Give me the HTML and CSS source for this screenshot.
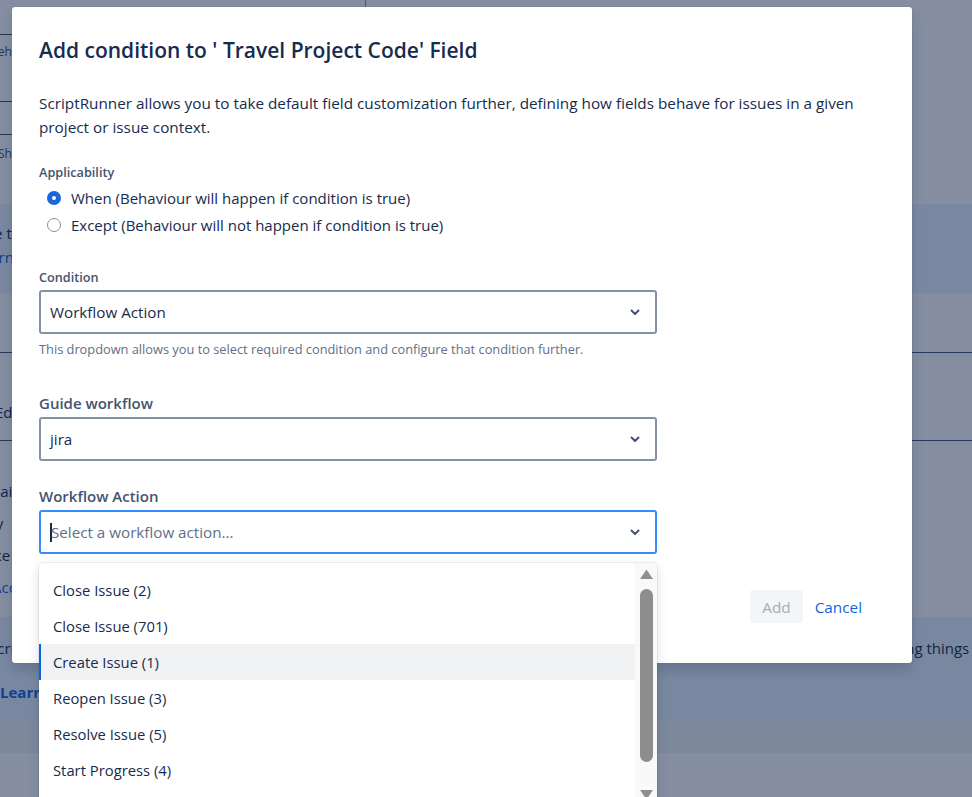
FILE: index.html
```html
<!DOCTYPE html>
<html lang="en">
<head>
<meta charset="utf-8">
<title>Add condition</title>
<link rel="stylesheet" href="styles.css">
</head>
<body>
<div class="page">
  <div class="top">
    <div class="top-left">
      <div class="tl-row tl-1"></div>
      <div class="tl-row tl-2"><span class="bg-small cut-a">Behaviours</span></div>
      <div class="tl-row tl-3"></div>
      <div class="tl-row tl-4"><span class="bg-small cut-b">Show</span></div>
    </div>
    <div class="top-right"></div>
  </div>
  <div class="banner banner-1">
    <div class="bg-text cut-c">Use the</div>
    <div class="bg-link cut-d">Learn more</div>
  </div>
  <div class="row row-5"></div>
  <div class="row row-6"><span class="bg-text cut-e">Edit</span></div>
  <div class="row row-7">
    <div class="bg-text cut-f">Email</div>
    <div class="bg-text cut-g">Summary</div>
    <div class="bg-text cut-h">Make</div>
    <div class="bg-link cut-i">Access</div>
  </div>
  <div class="banner banner-2">
    <div class="bg-line">
      <span class="bg-text cut-j">Scripting</span>
      <span class="bg-text tail">doing things better</span>
    </div>
    <div class="bg-link strong">Learn</div>
  </div>
  <div class="band"></div>
  <div class="rest"></div>
</div>

<div class="blanket"></div>

<section class="modal" role="dialog">
  <header class="modal-header">
    <h1 class="modal-title">Add condition to ' Travel Project Code' Field</h1>
  </header>
  <div class="modal-body">
    <p class="intro">ScriptRunner allows you to take default field customization further, defining how fields behave for issues in a given project or issue context.</p>

    <div class="label small">Applicability</div>
    <div class="radios">
      <div class="radio-row">
        <span class="radio checked"></span>
        <span class="radio-text">When (Behaviour will happen if condition is true)</span>
      </div>
      <div class="radio-row">
        <span class="radio"></span>
        <span class="radio-text">Except (Behaviour will not happen if condition is true)</span>
      </div>
    </div>

    <div class="label small cond-label">Condition</div>
    <div class="select">
      <span class="select-value">Workflow Action</span>
      <svg class="chev" width="10" height="7" viewBox="0 0 10 7"><path d="M1.5 1.5 5 5l3.5-3.5" fill="none" stroke="#44546F" stroke-width="2" stroke-linecap="round" stroke-linejoin="round"/></svg>
    </div>
    <div class="helper">This dropdown allows you to select required condition and configure that condition further.</div>

    <div class="label big guide-label">Guide workflow</div>
    <div class="select">
      <span class="select-value">jira</span>
      <svg class="chev" width="10" height="7" viewBox="0 0 10 7"><path d="M1.5 1.5 5 5l3.5-3.5" fill="none" stroke="#44546F" stroke-width="2" stroke-linecap="round" stroke-linejoin="round"/></svg>
    </div>

    <div class="label big action-label">Workflow Action</div>
    <div class="select-wrap">
      <div class="select focused">
        <span class="caret"></span>
        <span class="select-placeholder">Select a workflow action...</span>
        <svg class="chev" width="10" height="7" viewBox="0 0 10 7"><path d="M1.5 1.5 5 5l3.5-3.5" fill="none" stroke="#44546F" stroke-width="2" stroke-linecap="round" stroke-linejoin="round"/></svg>
      </div>
      <div class="menu">
        <ul class="options">
          <li class="option">Close Issue (2)</li>
          <li class="option">Close Issue (701)</li>
          <li class="option active">Create Issue (1)</li>
          <li class="option">Reopen Issue (3)</li>
          <li class="option">Resolve Issue (5)</li>
          <li class="option">Start Progress (4)</li>
          <li class="option">Stop Progress (301)</li>
        </ul>
        <div class="scrollbar">
          <svg class="arrow" width="13" height="10" viewBox="0 0 13 10"><path d="M6.5 0.5 13 10H0z" fill="#8f8f8f"/></svg>
          <div class="thumb"></div>
          <svg class="arrow" width="13" height="10" viewBox="0 0 13 10"><path d="M0 0h13L6.5 9.5z" fill="#8f8f8f"/></svg>
        </div>
      </div>
    </div>
  </div>
  <footer class="modal-footer">
    <button class="btn btn-add" disabled>Add</button>
    <button class="btn btn-cancel">Cancel</button>
  </footer>
</section>
</body>
</html>
```
FILE: styles.css
```css
* { box-sizing: border-box; }
html, body { margin: 0; padding: 0; height: 100%; overflow: hidden; }
body {
  font-family: "Open Sans", "Noto Sans", "Liberation Sans", sans-serif;
  color: #172B4D;
  background: #ffffff;
  position: relative;
}

/* ---------- background page ---------- */
.page { width: 972px; }
.top { display: flex; height: 204px; }
.top-left { width: 366px; border-right: 1px solid #8590A2; }
.top-right { flex: 1; }
.tl-row { border-bottom: 1px solid #44546F; }
.tl-1 { height: 35px; }
.tl-2 { height: 67px; padding-top: 8px; }
.tl-3 { height: 33px; }
.tl-4 { border-bottom: 0; padding-top: 10px; }
.bg-small { font-size: 12px; color: #44546F; display: block; }
.bg-text { font-size: 15px; color: #172B4D; line-height: 24px; white-space: nowrap; }
.bg-link { font-size: 15px; color: #0C66E4; line-height: 24px; white-space: nowrap; }
.strong { font-weight: 700; }
.cut-a { margin-left: -10px; }
.cut-b { margin-left: -2px; }
.banner { background: #E9F2FF; }
.banner-1 { height: 89px; padding-top: 17px; }
.cut-c { margin-left: -24px; }
.cut-d { margin-left: -26px; }
.row { border-bottom: 1px solid #44546F; }
.row-5 { height: 60px; }
.row-6 { height: 88px; padding-top: 47px; }
.cut-e { margin-left: -5px; }
.row-7 { height: 176px; padding-top: 34px; border-bottom: 0; }
.row-7 > div { line-height: 32px; }
.cut-f { margin-left: -22px; }
.cut-g { margin-left: -64px; }
.cut-h { margin-left: -28px; }
.cut-i { margin-left: -8px; }
.banner-2 { height: 104px; padding-top: 19px; }
.bg-line { display: flex; white-space: nowrap; }
.cut-j { margin-left: -11px; }
.tail { margin-left: auto; margin-right: -44px; }
.banner-2 .bg-link { margin-top: 20px; }
.band { height: 32px; background: #F1F2F4; }
.rest { height: 100px; background: #ffffff; }

.blanket {
  position: absolute;
  inset: 0;
  background: rgba(9, 30, 66, 0.5);
}

/* ---------- modal ---------- */
.modal {
  position: absolute;
  top: 7px;
  left: 12px;
  width: 900px;
  height: 656px;
  background: #fff;
  border-radius: 3px;
  box-shadow: 0 8px 12px rgba(9, 30, 66, 0.15), 0 0 1px rgba(9, 30, 66, 0.31);
}
.modal-header { padding: 31px 27px 0; }
.modal-title {
  margin: 0;
  font-size: 21px;
  line-height: 24px;
  font-weight: 600;
  color: #172B4D;
}
.modal-body { padding: 0 27px; }
.intro {
  margin: 29px 0 0;
  font-size: 15.3px;
  line-height: 24px;
  width: 820px;
}
.label { color: #44546F; font-weight: 600; }
.label.small { font-size: 12.7px; line-height: 16px; margin-top: 25px; }
.label.big { font-size: 15px; line-height: 20px; }
.label.cond-label { margin-top: 31px; }
.guide-label { margin-top: 36px; }
.action-label { margin-top: 25px; }

.radios { margin-top: 4px; }
.radio-row { display: flex; align-items: center; height: 27px; padding-left: 8px; }
.radio {
  width: 14px; height: 14px; border-radius: 50%;
  border: 1.5px solid #8590A2; background: #fff;
  margin-right: 10px; flex: none;
}
.radio.checked { border: 0; background: #1868DB; position: relative; }
.radio.checked::after {
  content: ""; position: absolute; left: 5px; top: 5px;
  width: 4px; height: 4px; border-radius: 50%; background: #fff;
}
.radio-text { font-size: 15px; color: #172B4D; }

.select {
  margin-top: 4px;
  width: 618px;
  height: 44px;
  border: 2px solid #8590A2;
  border-radius: 3px;
  display: flex;
  align-items: center;
  padding: 0 15px 0 9px;
  font-size: 15.2px;
  color: #172B4D;
}
.select-value { flex: 1; }
.cond-label + .select { margin-top: 5px; }
.helper { margin-top: 7px; font-size: 12.8px; line-height: 16px; color: #626F86; }

.select-wrap { position: relative; width: 618px; }
.select.focused { border-color: #388BFF; }
.caret { width: 2px; height: 19px; background: #172B4D; flex: none; margin-right: -1px; }
.select-placeholder { flex: 1; color: #626F86; }

.menu {
  position: absolute;
  left: 0;
  top: calc(100% + 9px);
  width: 618px;
  height: 245px;
  background: #fff;
  border-radius: 4px;
  box-shadow: 0 4px 11px rgba(9, 30, 66, 0.15), 0 0 0 1px rgba(9, 30, 66, 0.06);
  display: flex;
  overflow: hidden;
}
.options { list-style: none; margin: 0; padding: 9px 0 0; flex: 1; }
.option {
  height: 36px;
  line-height: 36px;
  padding-left: 12px;
  border-left: 2px solid transparent;
  font-size: 14.8px;
  color: #172B4D;
}
.option.active { background: #F1F2F4; border-left-color: #0C66E4; }
.scrollbar {
  width: 22px;
  background: #F9F9F9;
  display: flex;
  flex-direction: column;
  align-items: center;
  padding-top: 6px;
}
.thumb { width: 13px; height: 173px; background: #8D8D8D; border-radius: 7px; margin: 10px 0 28px; }

.modal-footer {
  display: flex;
  justify-content: flex-end;
  padding: 36px 38px 0 0;
}
.btn {
  font-family: inherit;
  font-size: 15.3px;
  height: 33px;
  border: 0;
  border-radius: 3px;
  padding: 0 12px;
  background: transparent;
  cursor: pointer;
}
.btn-add { background: #F4F5F7; color: #A5ADBA; }
.btn-cancel { color: #0C66E4; }
```
